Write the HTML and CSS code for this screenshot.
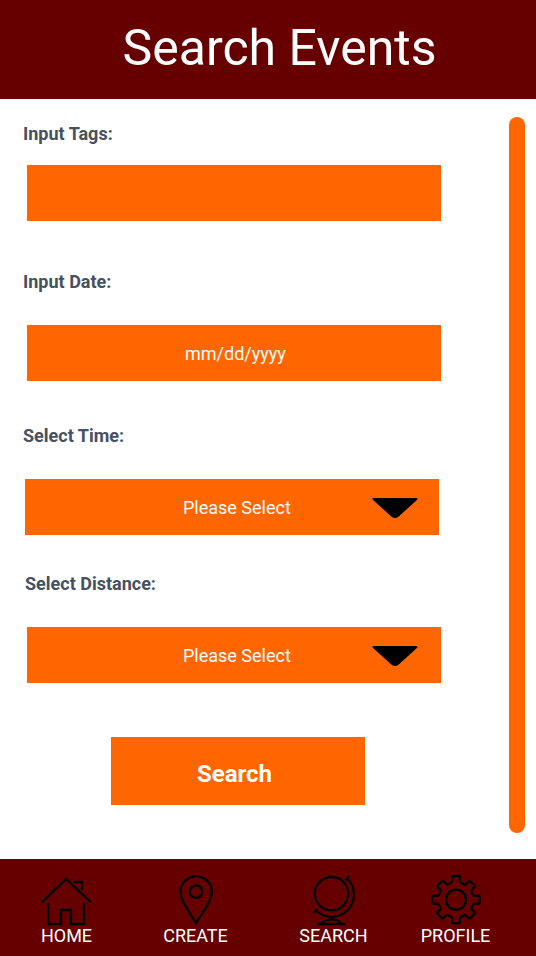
FILE: index.html
```html
<!DOCTYPE html>
<html lang="en">
<head>
<meta charset="utf-8">
<title>Search Events</title>
<link rel="stylesheet" href="styles.css">
</head>
<body>
<header class="header"><h1 class="title">Search Events</h1></header>
<main class="main">
  <form class="form">
    <section class="group tags">
      <div class="label">Input Tags:</div>
      <div class="field"></div>
    </section>
    <section class="group date">
      <div class="label">Input Date:</div>
      <div class="field"><span class="value">mm/dd/yyyy</span></div>
    </section>
    <section class="group time">
      <div class="label">Select Time:</div>
      <div class="field select">
        <span class="value">Please Select</span>
        <svg class="arrow" viewBox="0 0 46 21"><path d="M1.500 2H44.500L25.500 19.200Q23 20.800 20.500 19.200Z"/></svg>
      </div>
    </section>
    <section class="group distance">
      <div class="label">Select Distance:</div>
      <div class="field select">
        <span class="value">Please Select</span>
        <svg class="arrow" viewBox="0 0 46 21"><path d="M1.500 2H44.500L25.500 19.200Q23 20.800 20.500 19.200Z"/></svg>
      </div>
    </section>
    <button class="submit" type="button">Search</button>
  </form>
  <div class="scrollbar"></div>
</main>
<nav class="nav">
  <a class="item home">
    <svg class="icon" viewBox="0 0 52 50"><path d="M0.700 27.300L25.200 4L49.700 27.300M33 7H41V15M7.300 28V49H20V35H30V49H43V28"/></svg>
    <span>HOME</span>
  </a>
  <a class="item create">
    <svg class="icon" viewBox="0 0 52 50"><path d="M26 48.300C21.500 40 10.300 27 10.300 17A15.800 15.700 0 0 1 41.900 17C41.900 27 30.500 40 26 48.300Z"/><circle cx="26" cy="16.700" r="6.200"/></svg>
    <span>CREATE</span>
  </a>
  <a class="item search">
    <svg class="icon" viewBox="0 0 52 50"><circle cx="23.500" cy="18.700" r="16.700"/><path d="M37.300 5.200L41.100 1.200M5.500 37.600L9.500 34M39.200 3.500A22 22 0 0 1 7.800 35.500M23.300 41V44M13.500 48.300C17 43 29.500 43 33 48.300M9 49H37.500"/></svg>
    <span>SEARCH</span>
  </a>
  <a class="item profile">
    <svg class="icon" viewBox="0 0 52 50"><circle cx="26" cy="24.700" r="10"/><path d="M22.200 2Q22.200 1 23.200 1H28.800Q29.800 1 29.800 2V6.200Q30 7.500 33 8.700Q35 9.800 36 9L38.700 6.200Q39.500 5.500 40.200 6.200L44.500 10.500Q45.200 11.200 44.500 12L41.700 14.700Q40.900 15.700 42 17.700Q43.200 20.700 44.500 20.900H48.700Q49.700 20.900 49.700 21.900V27.500Q49.700 28.500 48.700 28.500H44.500Q43.200 28.700 42 31.700Q40.900 33.700 41.700 34.700L44.500 37.400Q45.200 38.200 44.500 38.900L40.200 43.200Q39.500 43.900 38.700 43.200L36 40.400Q35 39.600 33 40.700Q30 41.900 29.800 43.200V47.400Q29.800 48.400 28.800 48.400H23.200Q22.200 48.400 22.200 47.400V43.200Q22 41.900 19 40.700Q17 39.600 16 40.400L13.300 43.200Q12.500 43.900 11.800 43.200L7.500 38.900Q6.800 38.200 7.500 37.400L10.300 34.700Q11.100 33.700 10 31.700Q8.800 28.700 7.500 28.500H3.300Q2.300 28.500 2.300 27.500V21.900Q2.300 20.900 3.300 20.900H7.500Q8.800 20.700 10 17.700Q11.100 15.700 10.300 14.700L7.500 12Q6.800 11.200 7.500 10.500L11.800 6.200Q12.500 5.500 13.300 6.200L16 9Q17 9.800 19 8.700Q22 7.500 22.200 6.200Z"/></svg>
    <span>PROFILE</span>
  </a>
</nav>
</body>
</html>
```
FILE: styles.css
```css
* { box-sizing: border-box; }
body {
  margin: 0;
  width: 536px;
  height: 956px;
  display: flex;
  flex-direction: column;
  overflow: hidden;
  background: #fff;
  font-family: Roboto, sans-serif;
  font-size: 18px;
  line-height: 21px;
}
.header {
  height: 99px;
  padding: 19px 0 0 23px;
  background: #600;
  color: #fff;
  text-align: center;
}
.title { margin: 0; font-size: 50px; font-weight: 400; line-height: 59px; }
.main {
  height: 760px;
  display: flex;
  justify-content: space-between;
  padding: 18px 11px 0 23px;
}
.form { width: 418px; padding-top: 6px; }
.label { color: #465160; font-weight: 700; }
.field {
  width: 414px;
  height: 56px;
  margin-left: 4px;
  padding-top: 18px;
  background: #f60;
  color: #fff;
}
.value { display: block; margin-left: 158px; }
.tags .field { margin-top: 21px; }
.date { margin-top: 50px; }
.date .field { margin-top: 33px; }
.time { margin-top: 44px; }
.time .field { margin-top: 33px; margin-left: 2px; }
.distance { margin-top: 38px; }
.distance .label { margin-left: 2px; }
.distance .field { margin-top: 33px; }
.select { display: flex; }
.select .value { width: 189px; }
.distance .value { margin-left: 156px; }
.arrow { width: 46px; height: 21px; stroke: #000; stroke-width: 2; stroke-linejoin: round; }
.submit {
  display: block;
  width: 254px;
  height: 68px;
  margin: 54px 0 0 88px;
  padding: 6px 0 0;
  border: 0;
  background: #f60;
  color: #fff;
  font: 700 24px/28px Roboto, sans-serif;
  text-indent: -7px;
}
.scrollbar { width: 16px; height: 716px; border-radius: 8px; background: #f60; }
.nav {
  height: 97px;
  display: flex;
  padding: 16px 0 0 41px;
  background: #600;
  color: #fff;
}
.item { display: flex; flex-direction: column; align-items: center; white-space: nowrap; }
.home { width: 51px; }
.create { width: 65px; margin-left: 71px; }
.search { width: 69px; margin-left: 71px; }
.profile { width: 69px; margin-left: 53px; }
.icon { width: 52px; height: 50px; fill: none; stroke: #000; stroke-width: 2.3; flex: none; overflow: visible; }
```
